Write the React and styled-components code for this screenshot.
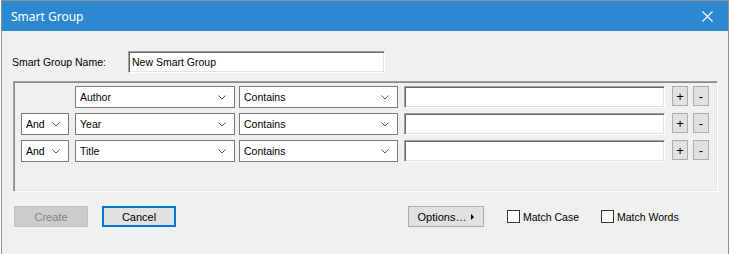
import React from 'react';
import styled, { createGlobalStyle } from 'styled-components';

const GlobalStyle = createGlobalStyle`
  html, body {
    margin: 0;
    padding: 0;
    background: #ffffff;
  }
  body {
    font-family: "Liberation Sans", Arial, sans-serif;
    font-size: 10.5px;
    color: #000;
  }
`;

const Page = styled.div`
  height: 254px;
  padding-left: 1px;
  box-sizing: border-box;
  overflow: hidden;
`;

const Window = styled.div`
  width: 728px;
  height: 254px;
  box-sizing: border-box;
  border: 1px solid #8f8f8f;
  border-bottom: none;
  background: #f0f0f0;
  display: flex;
  flex-direction: column;
`;

const TitleBar = styled.div`
  height: 30px;
  flex: none;
  background: #2b88d1;
  color: #ffffff;
  display: flex;
  align-items: center;
  justify-content: space-between;
  padding: 0 10px 0 9px;
  font-family: "Noto Sans", "Segoe UI", sans-serif;
  font-size: 12px;
`;

const Title = styled.span`
  padding-top: 1px;
`;

const CloseIcon = styled.svg`
  width: 11px;
  height: 11px;
  margin-right: 5px;
`;

const Body = styled.div`
  padding: 20px 10px 0 10px;
  display: flex;
  flex-direction: column;
`;

const NameRow = styled.div`
  display: flex;
  align-items: center;
`;

const NameLabel = styled.label`
  width: 116px;
`;

const Sunken = styled.div`
  box-sizing: border-box;
  background: #ffffff;
  border-style: solid;
  border-width: 1px;
  border-color: #a0a0a0 #ffffff #ffffff #a0a0a0;
  box-shadow: inset 1px 1px 0 #696969, inset -1px -1px 0 #e3e3e3;
  height: ${(p) => p.$h || 22}px;
  width: ${(p) => p.$w}px;
  display: flex;
  align-items: center;
  padding-left: 3px;
`;

const GroupBox = styled.div`
  margin: 8px 0 0 1px;
  width: 705px;
  height: 111px;
  box-sizing: border-box;
  border-style: solid;
  border-width: 1px;
  border-color: #a0a0a0 #ffffff #ffffff #a0a0a0;
  box-shadow: inset 1px 1px 0 #8a8a8a, inset -1px -1px 0 #e3e3e3;
  padding: 4px 0 0 7px;
  display: flex;
  flex-direction: column;
  gap: 5px;
`;

const CriteriaRow = styled.div`
  display: flex;
  align-items: flex-start;
`;

const Select = styled.div`
  box-sizing: border-box;
  width: ${(p) => p.$w}px;
  height: 22px;
  margin-left: ${(p) => p.$ml || 0}px;
  border: 1px solid #7a7a7a;
  background: #ffffff;
  display: flex;
  align-items: center;
  justify-content: space-between;
  padding: 0 8px 0 4px;
  visibility: ${(p) => (p.$hidden ? 'hidden' : 'visible')};
`;

const Chevron = () => (
  <svg width="8" height="5" viewBox="0 0 8 5">
    <path d="M0.5 0.5 L4 4 L7.5 0.5" fill="none" stroke="#555" strokeWidth="1" />
  </svg>
);

const TextField = styled(Sunken)`
  margin-left: 6px;
`;

const SmallButton = styled.div`
  box-sizing: border-box;
  width: 16px;
  height: 20px;
  margin-left: ${(p) => p.$ml}px;
  border: 1px solid #adadad;
  background: #e1e1e1;
  display: flex;
  align-items: center;
  justify-content: center;
  font-size: 13px;
`;

const Footer = styled.div`
  display: flex;
  align-items: center;
  margin-top: 14px;
  padding-left: 2px;
`;

const Button = styled.div`
  box-sizing: border-box;
  width: ${(p) => p.$w || 74}px;
  height: 21px;
  margin-left: ${(p) => p.$ml || 0}px;
  display: flex;
  align-items: center;
  justify-content: center;
  gap: 5px;
  border: ${(p) => (p.$default ? '2px solid #0078d7' : p.$disabled ? '1px solid #bfbfbf' : '1px solid #adadad')};
  background: ${(p) => (p.$disabled ? '#cccccc' : '#e1e1e1')};
  color: ${(p) => (p.$disabled ? '#838383' : '#000000')};
  font-size: 11px;
`;

const Arrow = styled.span`
  width: 0;
  height: 0;
  border-top: 3px solid transparent;
  border-bottom: 3px solid transparent;
  border-left: 3px solid #000;
  margin-top: 1px;
`;

const Check = styled.label`
  display: flex;
  align-items: center;
  margin-left: ${(p) => p.$ml}px;
  gap: 3px;
`;

const Box = styled.span`
  box-sizing: border-box;
  width: 13px;
  height: 13px;
  border: 1px solid #333333;
  background: #ffffff;
`;

const rows = [
  { join: null, field: 'Author' },
  { join: 'And', field: 'Year' },
  { join: 'And', field: 'Title' },
];

export default function App() {
  return (
    <>
      <GlobalStyle />
      <Page>
        <Window>
          <TitleBar>
            <Title>Smart Group</Title>
            <CloseIcon viewBox="0 0 11 11">
              <path d="M0.5 0.5 L10.5 10.5 M10.5 0.5 L0.5 10.5" stroke="#fff" strokeWidth="1.1" />
            </CloseIcon>
          </TitleBar>
          <Body>
            <NameRow>
              <NameLabel>Smart Group Name:</NameLabel>
              <Sunken $w={257}>New Smart Group</Sunken>
            </NameRow>
            <GroupBox>
              {rows.map((r) => (
                <CriteriaRow key={r.field}>
                  <Select $w={48} $hidden={!r.join}>
                    {r.join || 'And'}
                    <Chevron />
                  </Select>
                  <Select $w={160} $ml={6}>
                    {r.field}
                    <Chevron />
                  </Select>
                  <Select $w={159} $ml={4}>
                    Contains
                    <Chevron />
                  </Select>
                  <TextField $w={261} />
                  <SmallButton $ml={7}>+</SmallButton>
                  <SmallButton $ml={5}>-</SmallButton>
                </CriteriaRow>
              ))}
            </GroupBox>
            <Footer>
              <Button $disabled>Create</Button>
              <Button $default $ml={14}>Cancel</Button>
              <Button $w={76} $ml={232}>
                Options…<Arrow />
              </Button>
              <Check $ml={23}>
                <Box />
                Match Case
              </Check>
              <Check $ml={22}>
                <Box />
                Match Words
              </Check>
            </Footer>
          </Body>
        </Window>
      </Page>
    </>
  );
}
